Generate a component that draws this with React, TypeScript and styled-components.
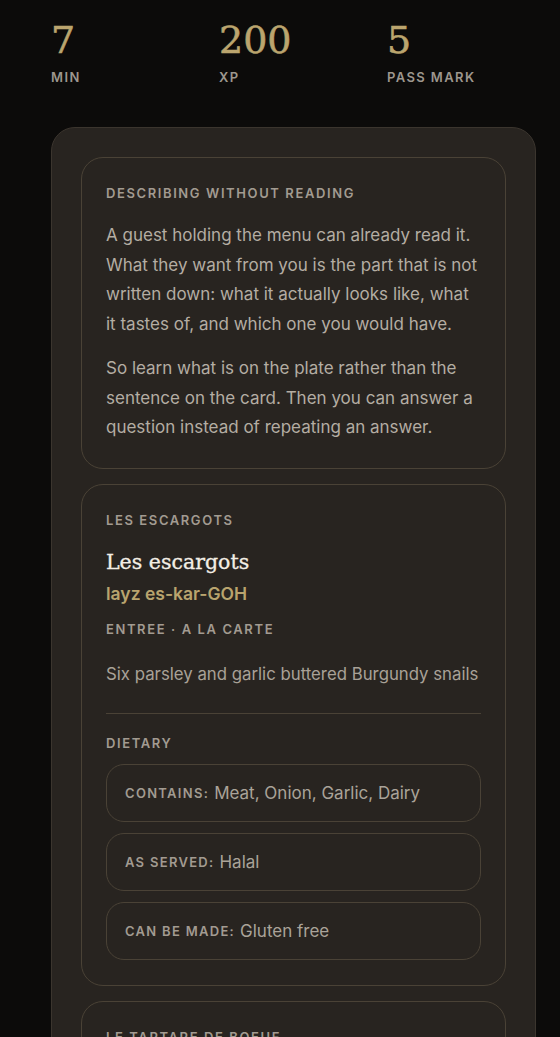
import React from "react";
import styled, { createGlobalStyle } from "styled-components";

const Global = createGlobalStyle`
  html, body { margin: 0; padding: 0; background: #0c0b0a; }
  body { font-family: "Inter", "Liberation Sans", sans-serif; -webkit-font-smoothing: antialiased; }
  * { box-sizing: border-box; }
`;

const Page = styled.div`
  padding: 20px 24px 0 51px;
  min-height: 1037px;
  background: #0c0b0a;
`;

const Stats = styled.div`
  display: grid;
  grid-template-columns: 168px 168px 1fr;
  margin-bottom: 42px;
`;

const Stat = styled.div`
  display: flex;
  flex-direction: column;
`;

const StatValue = styled.div`
  font-family: "DejaVu Serif", "Liberation Serif", serif;
  font-size: 38px;
  line-height: 40px;
  color: #bba56e;
  height: 40px;
  -webkit-text-stroke: 0.6px #bba56e;
`;

const StatLabel = styled.div`
  margin-top: 9px;
  font-size: 13px;
  font-weight: 600;
  letter-spacing: 1.4px;
  color: #9d978e;
  text-transform: uppercase;
`;

const Outer = styled.div`
  background: #282420;
  border: 1px solid #3b352e;
  border-radius: 24px;
  padding: 29px 29px 0;
  display: flex;
  flex-direction: column;
  gap: 15px;
`;

const Card = styled.div`
  border: 1px solid #4a4236;
  border-radius: 22px;
  padding: 26px 24px 25px;
`;

const Eyebrow = styled.div`
  font-size: 13px;
  font-weight: 600;
  letter-spacing: 1.6px;
  color: #a29b91;
  text-transform: uppercase;
  line-height: 18px;
`;

const Para = styled.p`
  margin: 19px 0 0;
  font-size: 17px;
  line-height: 29.5px;
  color: #b4ada3;
  & + & { margin-top: 15px; }
`;

const DishName = styled.div`
  margin-top: 18px;
  font-family: "DejaVu Serif", "Liberation Serif", serif;
  font-size: 20.5px;
  line-height: 30px;
  color: #f3eee5;
  -webkit-text-stroke: 0.3px #f3eee5;
`;

const Phonetic = styled.div`
  margin-top: 6px;
  font-size: 17.5px;
  font-weight: 600;
  color: #b9a46e;
  line-height: 22px;
`;

const Meta = styled(Eyebrow)`
  margin-top: 15px;
`;

const Desc = styled.div`
  margin-top: 23px;
  font-size: 16.8px;
  line-height: 26px;
  color: #a8a197;
`;

const Divider = styled.hr`
  border: none;
  border-top: 1px solid #4a4236;
  margin: 26px 0 20px;
`;

const Pills = styled.div`
  margin-top: 12px;
  display: flex;
  flex-direction: column;
  gap: 11px;
`;

const Pill = styled.div`
  height: 58px;
  border: 1px solid #4a4236;
  border-radius: 18px;
  padding: 0 18px;
  display: flex;
  align-items: center;
  font-size: 17px;
  color: #aaa399;
`;

const PillLabel = styled.span`
  font-size: 13px;
  font-weight: 600;
  letter-spacing: 1.3px;
  text-transform: uppercase;
  color: #a29b91;
  margin-right: 5px;
`;

const stats = [
  { v: "7", l: "Min" },
  { v: "200", l: "XP" },
  { v: "5", l: "Pass mark" },
];

const dietary = [
  { l: "Contains:", v: "Meat, Onion, Garlic, Dairy" },
  { l: "As served:", v: "Halal" },
  { l: "Can be made:", v: "Gluten free" },
];

export default function App() {
  return (
    <>
      <Global />
      <Page>
        <Stats>
          {stats.map((s) => (
            <Stat key={s.l}>
              <StatValue>{s.v}</StatValue>
              <StatLabel>{s.l}</StatLabel>
            </Stat>
          ))}
        </Stats>
        <Outer>
          <Card>
            <Eyebrow>Describing without reading</Eyebrow>
            <Para>
              A guest holding the menu can already read it. What they want from you is the part that is not
              written down: what it actually looks like, what it tastes of, and which one you would have.
            </Para>
            <Para>
              So learn what is on the plate rather than the sentence on the card. Then you can answer a
              question instead of repeating an answer.
            </Para>
          </Card>
          <Card>
            <Eyebrow>Les escargots</Eyebrow>
            <DishName>Les escargots</DishName>
            <Phonetic>layz es-kar-GOH</Phonetic>
            <Meta>Entree · A la carte</Meta>
            <Desc>Six parsley and garlic buttered Burgundy snails</Desc>
            <Divider />
            <Eyebrow>Dietary</Eyebrow>
            <Pills>
              {dietary.map((d) => (
                <Pill key={d.l}>
                  <PillLabel>{d.l}</PillLabel>
                  {d.v}
                </Pill>
              ))}
            </Pills>
          </Card>
          <Card>
            <Eyebrow>Le tartare de boeuf</Eyebrow>
            <DishName>Le tartare de boeuf</DishName>
          </Card>
        </Outer>
      </Page>
    </>
  );
}
